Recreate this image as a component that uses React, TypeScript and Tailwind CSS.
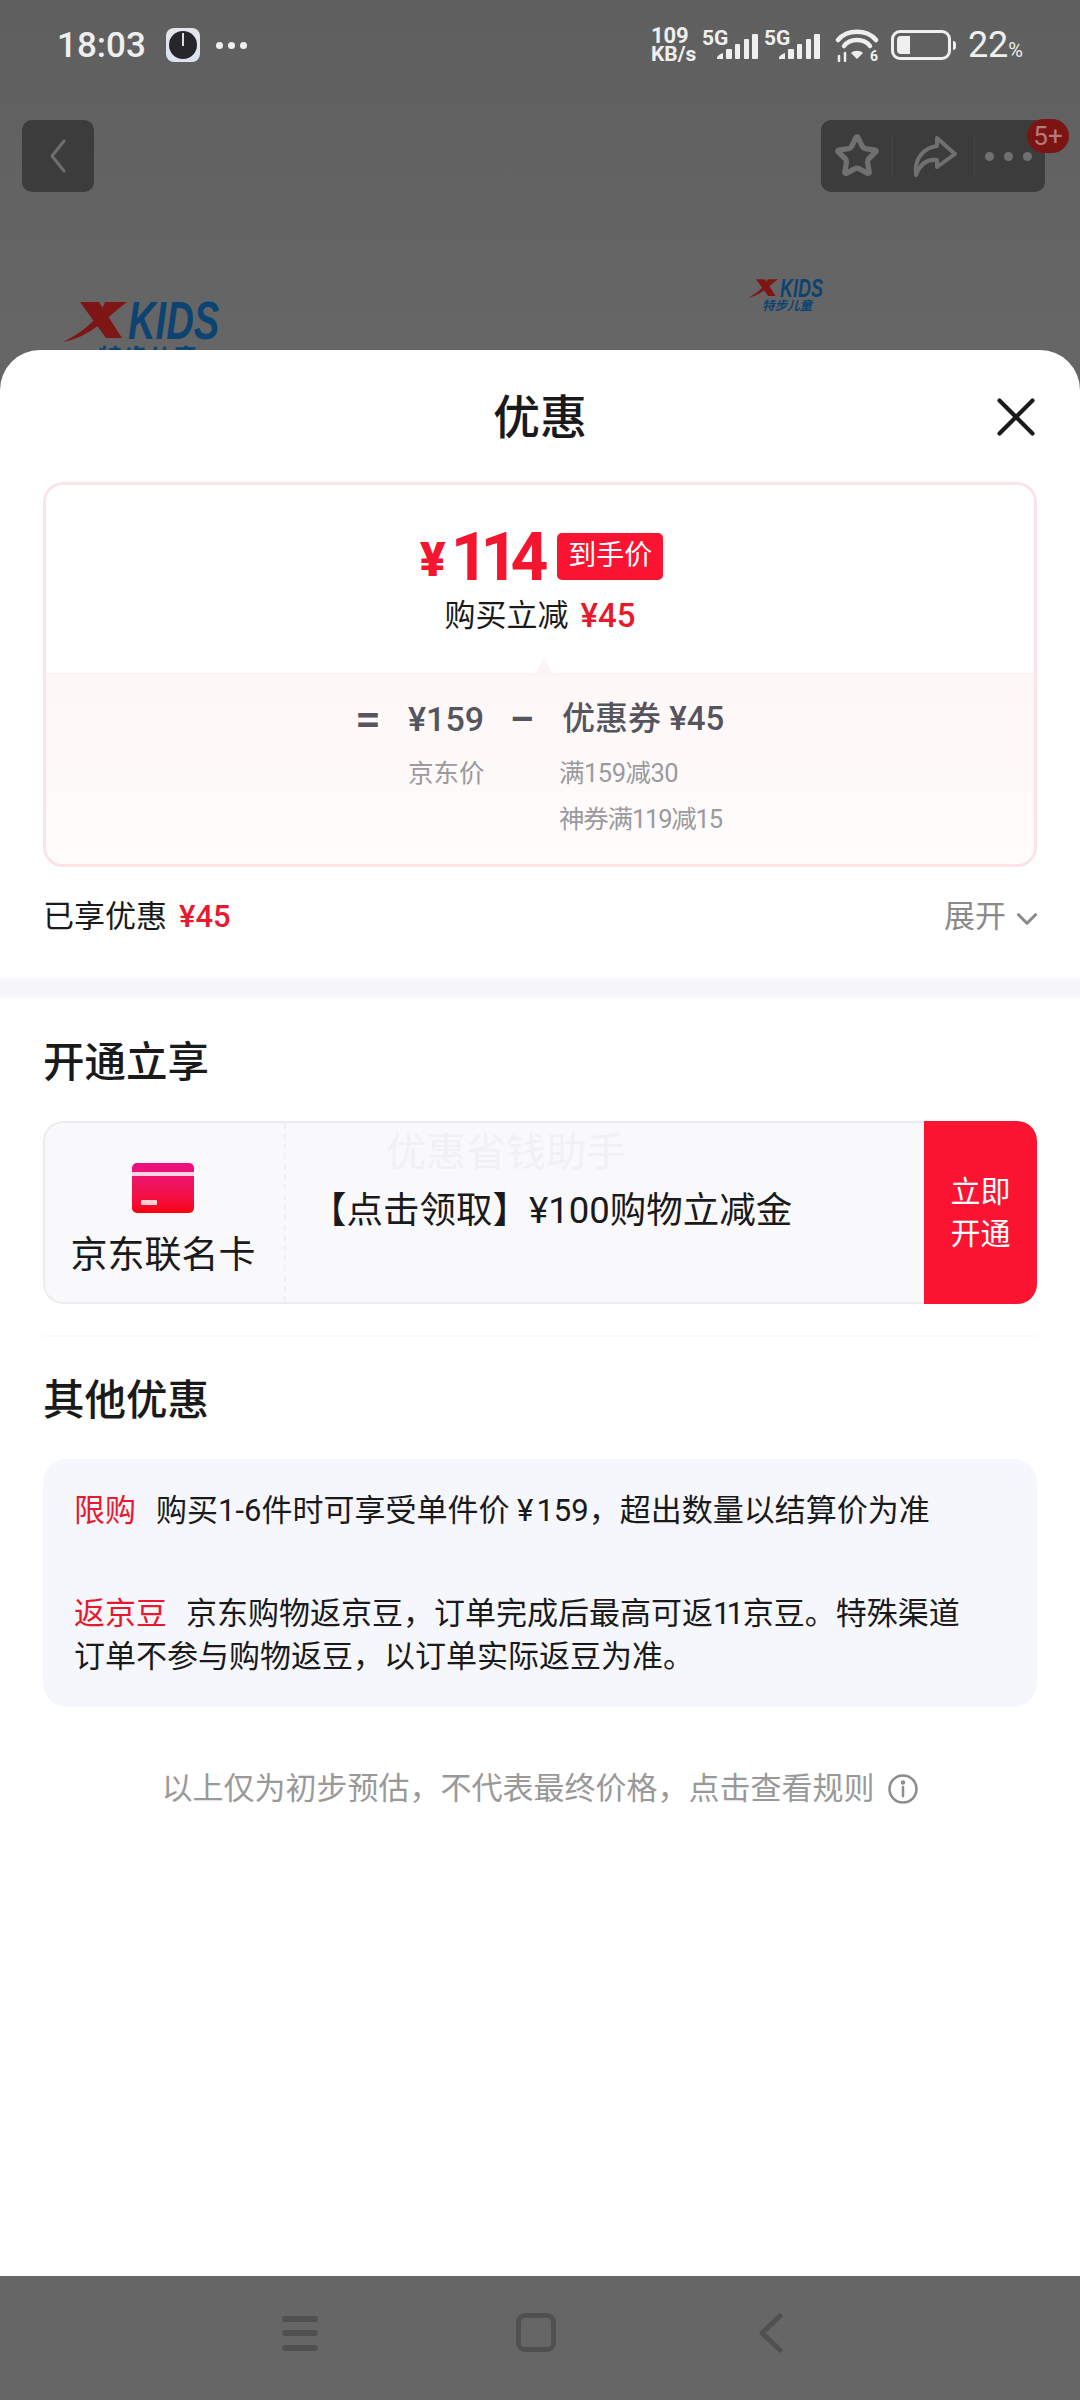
import { X, ChevronDown, Star } from 'lucide-react';

function Signal() {
  return (
    <div className="relative w-[57px] h-[32px]">
      <span className="absolute left-0 top-[-1px] text-[21px] leading-[20px] font-bold text-[#efefef]">5G</span>
      <svg width="57" height="32" viewBox="0 0 57 32" className="absolute left-0 top-0" fill="#efefef">
        <path d="M15 30 V29 C15 27 18 25 21 24 V30 Z" />
        <rect x="24" y="20" width="6" height="10" rx="1" />
        <rect x="33" y="15" width="5" height="15" rx="1" />
        <rect x="42" y="10" width="5" height="20" rx="1" />
        <rect x="50" y="5" width="6" height="25" rx="1" />
      </svg>
    </div>
  );
}

function StatusBar() {
  return (
    <div className="flex items-center justify-between h-[90px] pl-[57px] pr-[57px] text-[#efefef]">
      <div className="flex items-center">
        <span className="text-[35px] leading-none font-medium w-[109px]">18:03</span>
        <div className="w-[34px] h-[34px] rounded-[8px] bg-gradient-to-b from-[#e4e6ea] to-[#dbe2f2] flex items-center justify-center">
          <div className="w-[28px] h-[28px] rounded-full bg-[#26262a] flex justify-center">
            <div className="w-[2px] h-[13px] mt-[2px] bg-[#dddddd]" />
          </div>
        </div>
        <div className="flex gap-[5px] ml-[16px]">
          <div className="w-[7px] h-[7px] rounded-full bg-[#efefef]" />
          <div className="w-[7px] h-[7px] rounded-full bg-[#efefef]" />
          <div className="w-[7px] h-[7px] rounded-full bg-[#efefef]" />
        </div>
      </div>
      <div className="flex items-center">
        <div className="flex flex-col font-bold w-[51px] text-[21px] leading-[18px]">
          <span className="text-[22px]">109</span>
          <span>KB/s</span>
        </div>
        <Signal />
        <div className="w-[5px]" />
        <Signal />
        <svg width="44" height="34" viewBox="0 0 44 34" className="ml-[14px]" fill="none" stroke="#efefef" strokeLinecap="round">
          <path d="M3 12 C12 1 32 1 41 12" strokeWidth="4.5" />
          <path d="M9 18 C15 10 29 10 35 18" strokeWidth="4.5" />
          <path d="M22 31 L16 25 C19 22 25 22 28 25 Z" fill="#efefef" stroke="none" />
          <path d="M4 28 V33 M10 25 V33" strokeWidth="2.5" />
          <text x="35" y="33" fontSize="14" fontWeight="700" fill="#efefef" stroke="none">6</text>
        </svg>
        <div className="flex items-center ml-[12px]">
          <div className="w-[60px] h-[30px] rounded-[9px] border-[3px] border-[#efefef] p-[3px]">
            <div className="w-[13px] h-full rounded-l-[4px] bg-[#efefef]" />
          </div>
          <div className="w-[3px] h-[9px] ml-[2px] rounded-r-full bg-[#efefef]" />
        </div>
        <span className="text-[36px] leading-none ml-[12px]">22</span>
        <span className="text-[20px] leading-none mt-[10px]">%</span>
      </div>
    </div>
  );
}

function ShareIcon() {
  return (
    <svg width="46" height="44" viewBox="0 0 46 44" fill="none" stroke="#707070" strokeWidth="4" strokeLinejoin="round">
      <path d="M25 4 L43 20 L25 33 V26 C15 25 8 30 4 41 C2 25 11 14 25 12 Z" />
    </svg>
  );
}

function NavHeader() {
  return (
    <div className="flex items-start justify-between pl-[22px] pr-[35px] pt-[30px]">
      <div className="w-[72px] h-[72px] rounded-[10px] bg-[#3c3c3c] flex items-center justify-center">
        <svg width="18" height="34" viewBox="0 0 18 34" fill="none" stroke="#6e6e6e" strokeWidth="3" strokeLinecap="round" strokeLinejoin="round">
          <path d="M15 2 L3 17 L15 32" />
        </svg>
      </div>
      <div className="relative w-[224px] h-[72px] rounded-[10px] bg-[#3c3c3c] flex items-center pl-[13px]">
        <Star size={46} color="#707070" strokeWidth={2.8} />
        <div className="w-[1px] h-[40px] bg-[#454545] ml-[12px]" />
        <div className="ml-[19px]"><ShareIcon /></div>
        <div className="w-[1px] h-[40px] bg-[#454545] ml-[16px]" />
        <div className="flex gap-[10px] ml-[10px]">
          <div className="w-[9px] h-[9px] rounded-full bg-[#707070]" />
          <div className="w-[9px] h-[9px] rounded-full bg-[#707070]" />
          <div className="w-[9px] h-[9px] rounded-full bg-[#707070]" />
        </div>
        <div className="absolute right-[-24px] top-[-1px] w-[42px] h-[34px] rounded-full bg-[#7d1414] text-[#b57a7a] text-[26px] leading-[34px] text-center">5+</div>
      </div>
    </div>
  );
}

function XMark({ width, height }: { width: number; height: number }) {
  return (
    <svg width={width} height={height} viewBox="0 0 64 40" className="shrink-0">
      <path d="M17 0 H36 L59 36 H43 Z" fill="#7f1616" />
      <path d="M42 0 H64 C52 9 44 17 36 23 C24 32 12 38 0 40 C12 34 24 26 32 17 C36 12 40 6 42 0 Z" fill="#7f1616" />
    </svg>
  );
}

function Logo({ big }: { big?: boolean }) {
  if (big) {
    return (
      <div className="w-[155px]">
        <div className="flex h-[40px]">
          <XMark width={64} height={40} />
          <span className="ml-[1px] w-[90px] origin-left scale-x-[0.72] italic font-bold font-['Liberation_Sans',sans-serif] text-[53px] leading-[38px] text-[#0c4372]">KIDS</span>
        </div>
        <div className="mt-[2px] pl-[30px] italic font-bold text-[25px] leading-[30px] whitespace-nowrap text-[#0c4372]">特步儿童</div>
      </div>
    );
  }
  return (
    <div className="w-[75px]">
      <div className="flex h-[19px]">
        <XMark width={30} height={19} />
        <span className="ml-[2px] w-[43px] origin-left scale-x-[0.72] italic font-bold font-['Liberation_Sans',sans-serif] text-[25px] leading-[18px] text-[#0c4372]">KIDS</span>
      </div>
      <div className="mt-[1px] pl-[14px] italic font-bold text-[12.5px] leading-[14px] whitespace-nowrap text-[#0c4372]">特步儿童</div>
    </div>
  );
}

function Backdrop() {
  return (
    <div className="h-[350px] overflow-hidden bg-gradient-to-b from-[#5e5f5e] to-[#666666]">
      <StatusBar />
      <NavHeader />
      <div className="flex items-start pl-[63px] pt-[87px]">
        <div className="mt-[23px]"><Logo big /></div>
        <div className="ml-[530px]"><Logo /></div>
      </div>
    </div>
  );
}

function PriceCard() {
  return (
    <div className="relative mx-[43px] h-[385px] rounded-[20px] border-[3px] border-[#fae4e8] overflow-hidden">
      <div className="h-[188px] pt-[46px] flex flex-col items-center">
        <div className="flex items-center h-[50px] ml-[3px]">
          <span className="text-[#f4162f] font-black text-[48px] leading-none mt-[8px]">¥</span>
          <span className="text-[#f4162f] font-bold text-[66px] leading-none tracking-[-8px] ml-[5px] mr-[17px] mt-[3px]">114</span>
          <span className="w-[106px] h-[47px] rounded-[5px] bg-[#fa1431] text-white text-[28px] leading-[45px] text-center">到手价</span>
        </div>
        <div className="flex items-center mt-[15px] text-[31px] leading-[40px] text-[#1a1a1a]">
          <span>购买立减</span>
          <span className="text-[#e8192e] font-medium text-[33px] ml-[12px]">¥45</span>
        </div>
      </div>
      <svg width="28" height="20" viewBox="0 0 28 20" className="absolute left-[484px] top-[171px]">
        <path d="M0 19 C6 19 10 10 14 1 C18 10 22 19 28 19 Z" fill="#fdf3f4" />
      </svg>
      <div className="h-[191px] bg-gradient-to-b from-[#fef7f7] to-[#fffcfc] border-t-[2px] border-[#fdf3f4] pt-[23px] pl-[309px] flex items-start text-[#55555e]">
        <span className="w-[53px] text-[46px] leading-[42px] font-medium">=</span>
        <div className="w-[101px]">
          <div className="text-[34px] leading-[42px] font-medium">¥159</div>
          <div className="text-[25.5px] leading-[34px] mt-[16px] text-[#9a9a9f]">京东价</div>
        </div>
        <span className="w-[53px] text-[46px] leading-[42px] font-medium">−</span>
        <div>
          <div className="text-[33px] leading-[42px] font-medium">优惠券 ¥45</div>
          <div className="text-[25.5px] leading-[34px] mt-[16px] ml-[-3px] tracking-[-0.5px] text-[#9a9a9f]">满159减30</div>
          <div className="text-[25.5px] leading-[34px] mt-[12px] ml-[-3px] tracking-[-1.2px] text-[#9a9a9f]">神券满119减15</div>
        </div>
      </div>
    </div>
  );
}

function CardIcon() {
  return (
    <div className="relative w-[62px] h-[50px] rounded-[5px] bg-gradient-to-b from-[#ea0f82] to-[#f80000]">
      <div className="absolute left-0 right-0 top-[9px] h-[4px] bg-[#fcd3e4]" />
      <div className="absolute left-[9px] top-[37px] w-[16px] h-[5px] rounded-[1px] bg-[#fbd0d0]" />
    </div>
  );
}

function JoinCard() {
  return (
    <div className="relative mx-[43px] h-[183px] rounded-[20px] flex overflow-hidden">
      <div className="flex-1 flex rounded-l-[20px] border-y-[2px] border-l-[2px] border-[#ececee] bg-[#f9f9fb]">
        <div className="w-[241px] pr-[3px] border-r-[2px] border-dashed border-[#f0f0f2] flex flex-col items-center pt-[40px]">
          <CardIcon />
          <div className="text-[37px] leading-[48px] whitespace-nowrap text-[#1a1a1a] mt-[19px]">京东联名卡</div>
        </div>
        <div className="flex-1 pl-[24px] pt-[63px] text-[36.5px] leading-[50px] text-[#1a1a1a]">
          【点击领取】¥100购物立减金
        </div>
      </div>
      <div className="w-[113px] bg-[#fa1431] text-white text-[30px] leading-[42px] flex flex-col items-center justify-center">
        <span>立即</span>
        <span>开通</span>
      </div>
      <div className="absolute left-[343px] top-[7px] text-[40px] leading-[50px] text-[#f1f1f4]">优惠省钱助手</div>
    </div>
  );
}

function OtherInfo() {
  return (
    <div className="mx-[43px] h-[248px] rounded-[24px] bg-[#f6f7fc] pl-[31px] pr-[60px] pt-[30px] text-[31px] leading-[43px] text-[#1a1a1a]">
      <p>
        <span className="text-[#e8192e] mr-[20px]">限购</span>购买1-6件时可享受单件价 <span className="mr-[3px]">¥</span>159，超出数量以结算价为准
      </p>
      <p className="mt-[60px]">
        <span className="text-[#e8192e] mr-[19px]">返京豆</span>京东购物返京豆，订单完成后最高可返<span className="tracking-[-4px] mr-[3px]">11</span>京豆。特殊渠道订单不参与购物返豆，以订单实际返豆为准。
      </p>
    </div>
  );
}

function Sheet() {
  return (
    <div className="flex-1 bg-white rounded-t-[40px] overflow-hidden flex flex-col">
      <div className="h-[132px] pt-[2px] grid grid-cols-[1fr_auto_1fr] items-center px-[43px]">
        <div />
        <span className="text-[47px] leading-none text-[#1a1a1a] font-medium">优惠</span>
        <div className="flex justify-end">
          <X size={66} strokeWidth={1.5} color="#1a1a1a" className="mr-[-12px]" />
        </div>
      </div>
      <PriceCard />
      <div className="flex items-center justify-between mx-[43px] h-[96px] pt-[2px] text-[31px] leading-none">
        <div className="flex items-center text-[#1a1a1a]">
          <span>已享优惠</span>
          <span className="text-[#e8192e] font-medium ml-[12px]">¥45</span>
        </div>
        <div className="flex items-center text-[#8a8a8a]">
          <span>展开</span>
          <ChevronDown size={34} strokeWidth={2.2} className="ml-[4px] mr-[-7px] mt-[6px]" />
        </div>
      </div>
      <div className="h-[20px] bg-[#f7f7fb] mt-[15px]" />
      <div className="mx-[43px] h-[123px] pt-[8px] flex items-center text-[41.5px] font-medium text-[#1a1a1a]">开通立享</div>
      <JoinCard />
      <div className="h-[2px] mx-[43px] bg-[#f9f9f9] mt-[31px]" />
      <div className="mx-[43px] h-[122px] pt-[6px] flex items-center text-[41.5px] font-medium text-[#1a1a1a]">其他优惠</div>
      <OtherInfo />
      <div className="flex items-center justify-center mt-[62px] text-[31px] leading-[40px] text-[#999999]">
        <span>以上仅为初步预估，不代表最终价格，点击查看规则</span>
        <svg width="32" height="32" viewBox="0 0 32 32" className="ml-[12px]" fill="none" stroke="#8c8c8c" strokeWidth="2.5" strokeLinecap="round">
          <circle cx="16" cy="16" r="13.5" />
          <path d="M16 14 V23" />
          <circle cx="16" cy="9.5" r="1" fill="#8c8c8c" />
        </svg>
      </div>
    </div>
  );
}

function BottomNav() {
  return (
    <div className="h-[124px] bg-[#666666] flex items-start justify-center pt-[37px]">
      <svg width="38" height="40" viewBox="0 0 38 40" fill="#505050" className="ml-[-16px]">
        <rect x="1" y="3" width="36" height="6" rx="3" />
        <rect x="1" y="17" width="36" height="6" rx="3" />
        <rect x="1" y="32" width="36" height="6" rx="3" />
      </svg>
      <div className="w-[40px] h-[39px] ml-[197px] rounded-[9px] border-[5px] border-[#505050]" />
      <svg width="26" height="40" viewBox="0 0 26 40" fill="none" stroke="#505050" strokeWidth="5" strokeLinecap="round" strokeLinejoin="round" className="ml-[202px]">
        <path d="M22 3 L4 20 L22 37" />
      </svg>
    </div>
  );
}

export default function App() {
  return (
    <div className="w-[1080px] h-[2400px] flex flex-col overflow-hidden bg-[#666666] font-['Roboto','Noto_Sans_CJK_SC',sans-serif]">
      <Backdrop />
      <Sheet />
      <BottomNav />
    </div>
  );
}
